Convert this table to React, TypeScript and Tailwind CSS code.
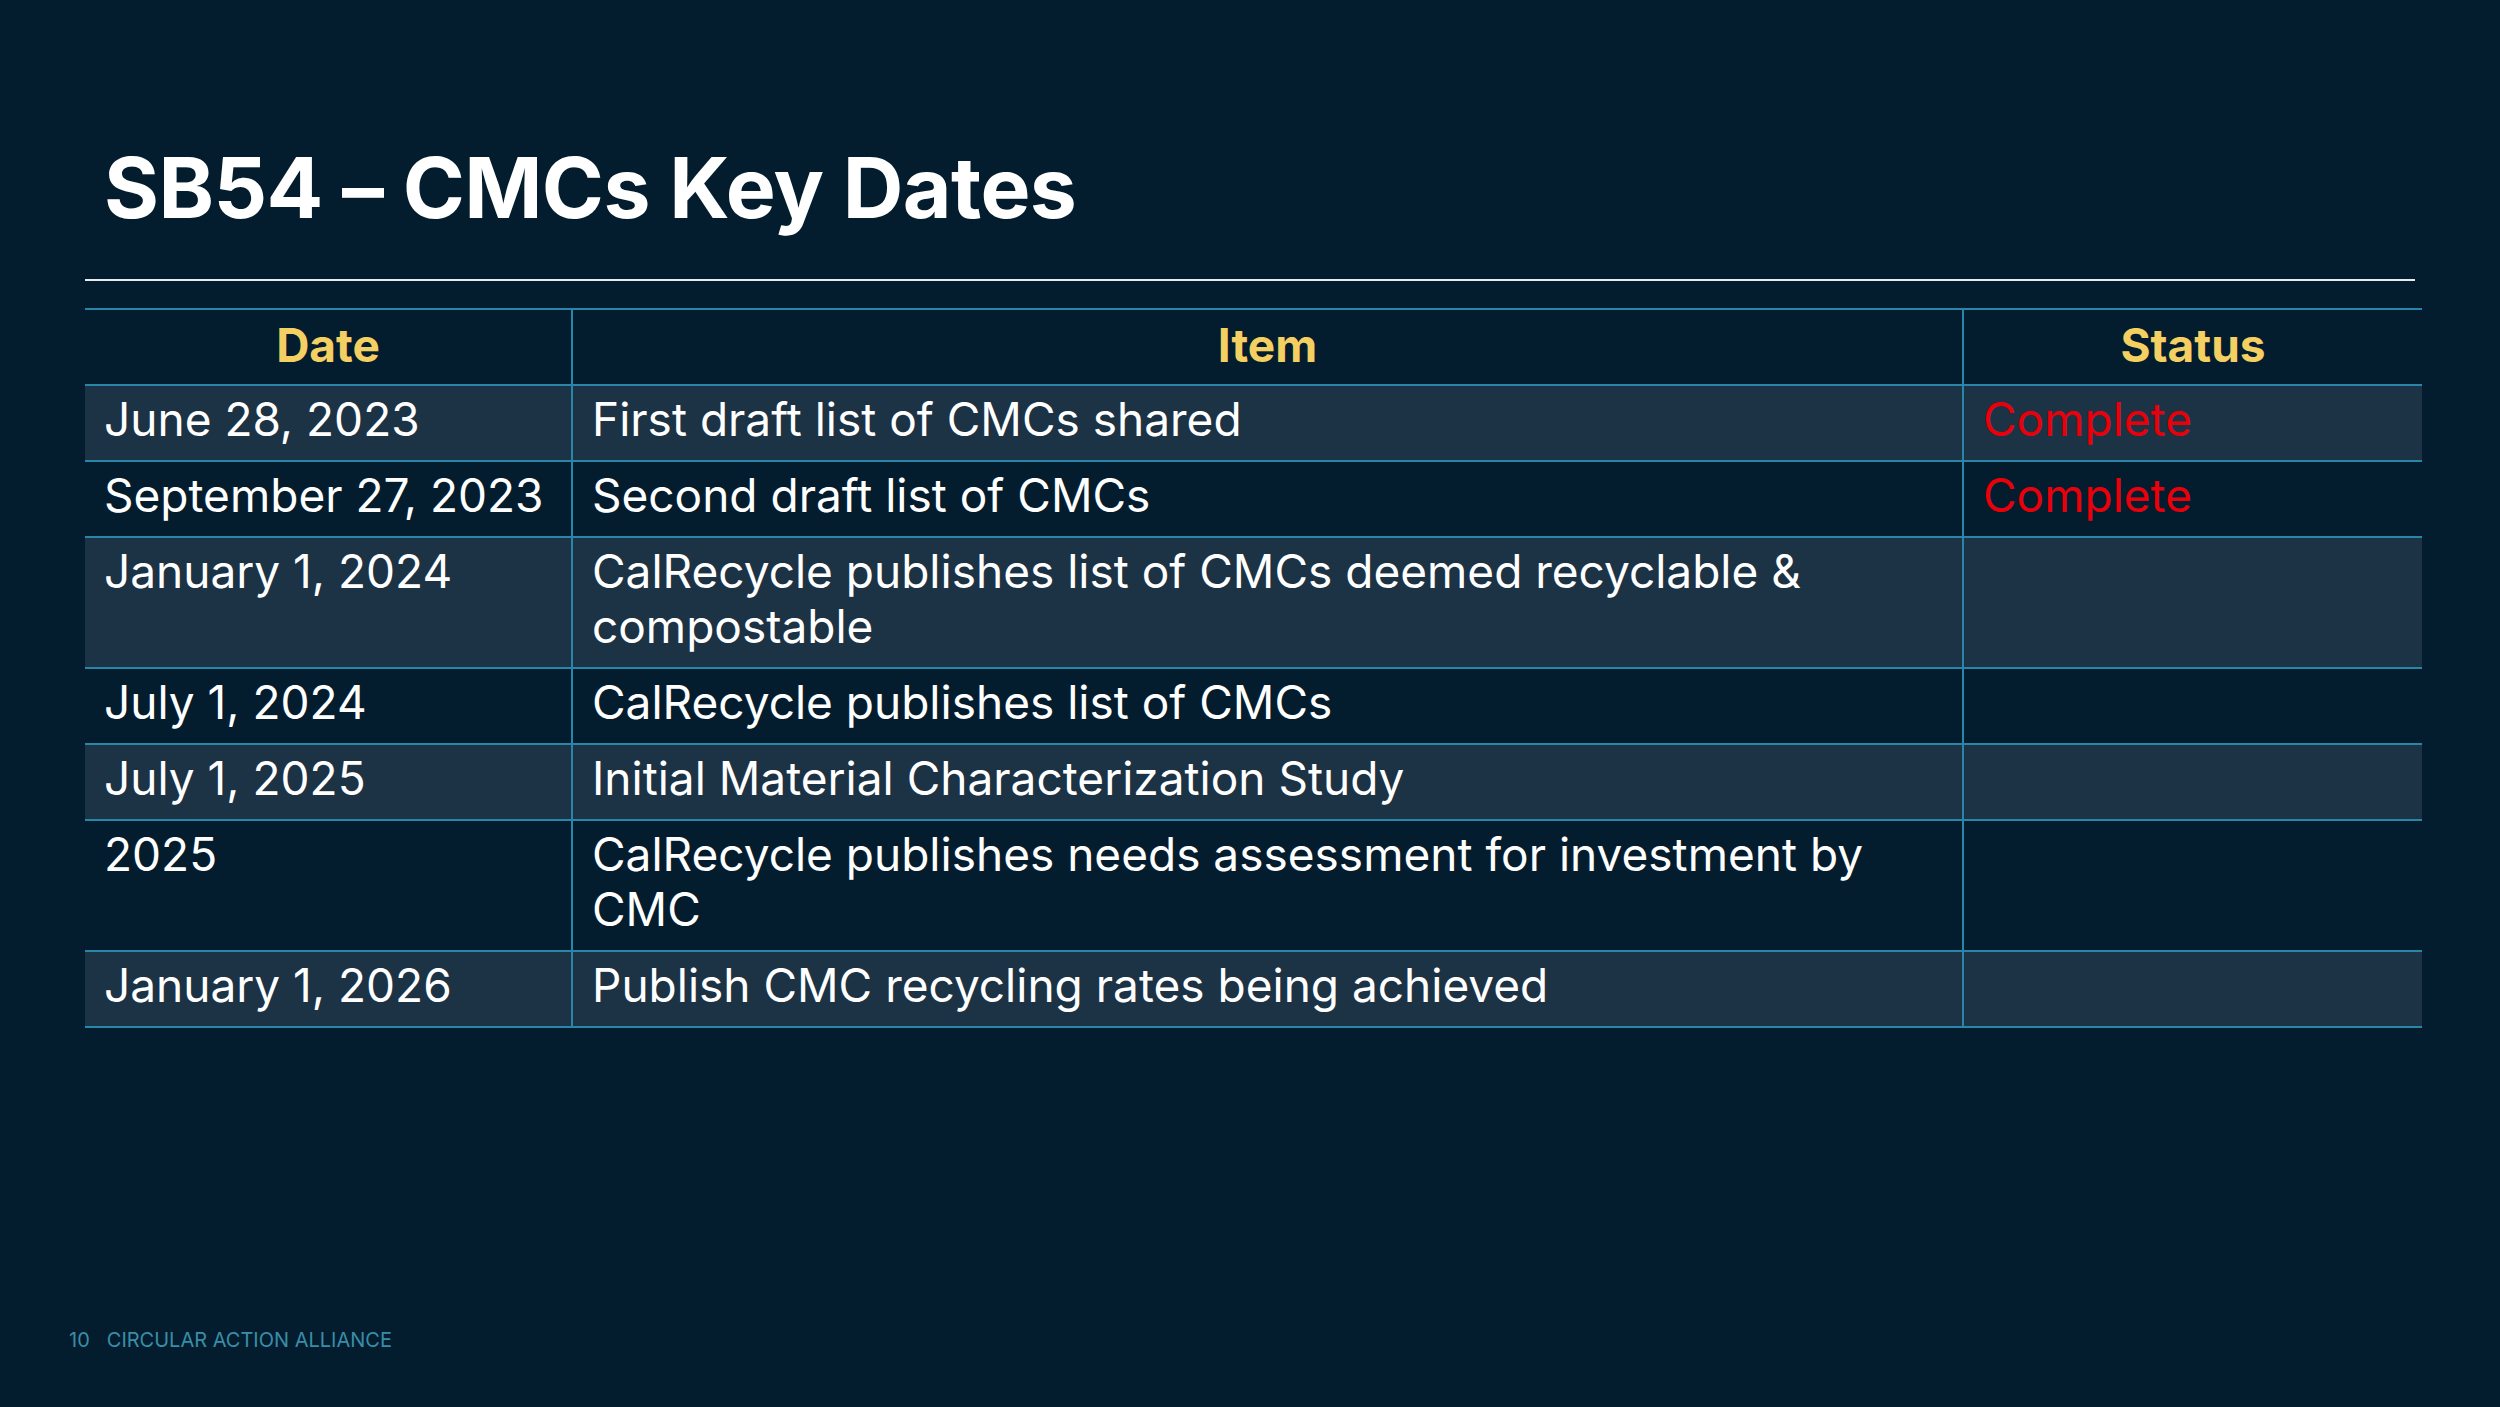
import React from 'react';

const rows = [
  { date: 'June 28, 2023', item: 'First draft list of CMCs shared', status: 'Complete', shade: true },
  { date: 'September 27, 2023', item: 'Second draft list of CMCs', status: 'Complete', shade: false },
  { date: 'January 1, 2024', item: 'CalRecycle publishes list of CMCs deemed recyclable & compostable', status: '', shade: true },
  { date: 'July 1, 2024', item: 'CalRecycle publishes list of CMCs', status: '', shade: false },
  { date: 'July 1, 2025', item: 'Initial Material Characterization Study', status: '', shade: true },
  { date: '2025', item: 'CalRecycle publishes needs assessment for investment by CMC', status: '', shade: false },
  { date: 'January 1, 2026', item: 'Publish CMC recycling rates being achieved', status: '', shade: true },
];

export default function App() {
  return (
    <div
      className="relative h-[1407px] w-[2500px] overflow-hidden bg-[#031d2e] text-white"
      style={{ fontFamily: 'Inter, "Noto Sans", sans-serif' }}
    >
      <div className="px-[85px] pt-[146px]">
        <h1 className="ml-[19px] text-[84px] font-bold leading-none tracking-[-0.6px]">SB54 – CMCs Key Dates</h1>
        <div className="mt-[49px] h-[2px] w-[2330px] bg-[#e6ebef]" />

        <table className="mt-[27px] w-[2337px] table-fixed border-collapse text-[46px] leading-[55px]">
          <colgroup>
            <col className="w-[487px]" />
            <col className="w-[1391px]" />
            <col className="w-[459px]" />
          </colgroup>
          <thead>
            <tr className="h-[76px]">
              <th className="border-y-2 border-r-2 border-[#2a86a8] pb-[4px] text-center font-bold text-[#f4cf62]">Date</th>
              <th className="border-2 border-[#2a86a8] pb-[4px] text-center font-bold text-[#f4cf62]">Item</th>
              <th className="border-y-2 border-l-2 border-[#2a86a8] pb-[4px] text-center font-bold text-[#f4cf62]">Status</th>
            </tr>
          </thead>
          <tbody>
            {rows.map((r) => (
              <tr key={r.date} className={r.shade ? 'bg-[#1c3245]' : 'bg-[#031d2e]'}>
                <td className="border-y-2 border-r-2 border-[#2a86a8] px-[19px] pb-[13px] pt-[6px] align-top">{r.date}</td>
                <td className="border-2 border-[#2a86a8] px-[19px] pb-[13px] pt-[6px] align-top">{r.item}</td>
                <td className="border-y-2 border-l-2 border-[#2a86a8] px-[19px] pb-[13px] pt-[6px] align-top text-[#e8000b]">
                  {r.status}
                </td>
              </tr>
            ))}
          </tbody>
        </table>
      </div>

      <div className="absolute bottom-[52px] left-[69px] flex items-center gap-[17px] text-[20px] text-[#3a8da8]">
        <span>10</span>
        <span>CIRCULAR ACTION ALLIANCE</span>
      </div>
    </div>
  );
}
